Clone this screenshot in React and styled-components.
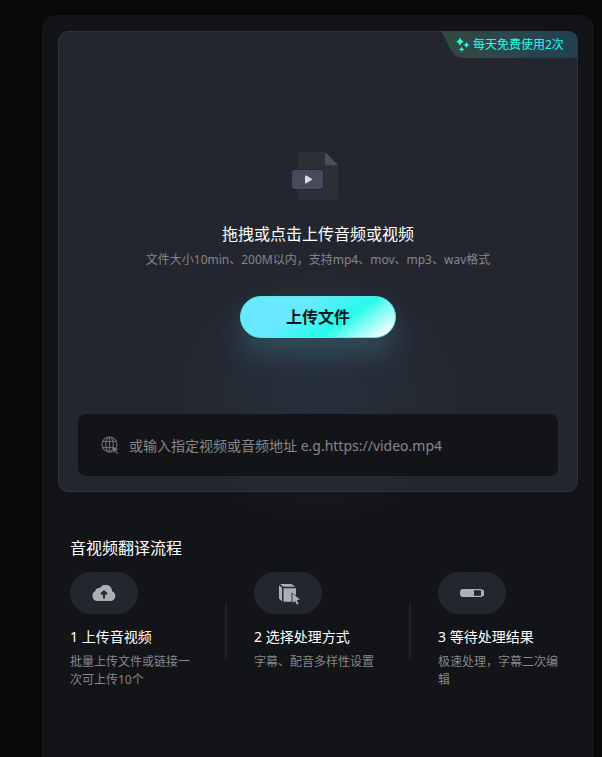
import React, { useState } from 'react';
import styled, { createGlobalStyle } from 'styled-components';

const GlobalStyle = createGlobalStyle`
  * {
    box-sizing: border-box;
  }
  body {
    margin: 0;
    background-color: #090909;
    color: #fff;
    font-family: "Noto Sans", "Noto Sans CJK SC", sans-serif;
  }
  h2, h3, p {
    margin: 0;
    font-weight: 400;
  }
`;
const Page = styled.div`
  display: flex;
  min-height: 100vh;
  padding: 15px 8px 0 42px;
`;
const Panel = styled.main`
  flex: 1;
  min-width: 0;
  padding: 16px;
  border-radius: 14px 14px 0 0;
  background-color: #131418;
`;
const UploadCard = styled.section`
  position: relative;
  display: flex;
  flex-direction: column;
  align-items: center;
  padding: 120px 19px 15px;
  border: 1px solid #303338;
  border-radius: 10px;
  background-color: #23262e;
`;
const Glow = styled.div`
  position: absolute;
  left: 50%;
  bottom: -32px;
  width: 300px;
  height: 260px;
  transform: translateX(-50%);
  background: radial-gradient(closest-side, rgba(54, 100, 130, 0.15), rgba(54, 100, 130, 0.08) 60%, transparent);
  pointer-events: none;
`;
const Badge = styled.div`
  position: absolute;
  top: -1px;
  right: -1px;
  display: flex;
  align-items: center;
  gap: 3px;
  width: 137px;
  height: 27px;
  padding-left: 15px;
  border-radius: 0 10px 0 0;
  background: linear-gradient(90deg, #33493f, #2a474d 50%, #213f4f);
  clip-path: path('M0 0H137V27H25C17 27 13 24 10 19Z');
  color: #26fbea;
  font-size: 12px;
  line-height: 18px;
  white-space: nowrap;
`;
const CardTitle = styled.h2`
  margin-top: 22px;
  font-size: 16px;
  line-height: 24px;
`;
const Hint = styled.p`
  margin-top: 5px;
  color: #85878b;
  font-size: 12px;
  line-height: 18px;
`;
const UploadBtn = styled.button`
  position: relative;
  width: 156px;
  height: 42px;
  margin-top: 27px;
  padding: 0 0 2px;
  border: 1px solid #5ce8e4;
  border-radius: 21px;
  background: linear-gradient(145deg, #68e9ff 36%, #26fbea 64%, #fff 94%) border-box;
  box-shadow: 0 16px 30px rgba(92, 190, 220, 0.24);
  color: #0b1a20;
  font-family: inherit;
  font-size: 16px;
  font-weight: 700;
  cursor: pointer;
`;
const UrlField = styled.label`
  position: relative;
  display: flex;
  align-items: center;
  gap: 8px;
  width: 100%;
  height: 62px;
  margin-top: 76px;
  padding: 0 23px;
  border-radius: 8px;
  background-color: #131418;
`;
const UrlInput = styled.input`
  flex: 1;
  min-width: 0;
  padding: 0;
  border: none;
  outline: none;
  background: none;
  color: #fff;
  font-family: inherit;
  font-size: 14px;
  &::placeholder {
    color: #85878b;
    opacity: 1;
  }
`;
const Process = styled.section`
  padding: 44px 12px 0;
`;
const ProcessTitle = styled.h2`
  font-size: 16px;
  line-height: 24px;
`;
const Steps = styled.div`
  display: grid;
  grid-template-columns: 1fr 2px 1fr 2px 1fr;
  column-gap: 27px;
  margin-top: 12px;
`;
const Divider = styled.div`
  height: 57px;
  margin-top: 30px;
  background-color: #202126;
`;
const IconPill = styled.div`
  display: flex;
  justify-content: center;
  align-items: center;
  width: 68px;
  height: 42px;
  border-radius: 21px;
  background-color: #23262e;
`;
const StepTitle = styled.h3`
  margin-top: 12px;
  font-size: 14px;
  line-height: 22px;
  white-space: nowrap;
`;
const StepText = styled.p`
  margin-top: 5px;
  color: #85878b;
  font-size: 12px;
  line-height: 18px;
`;

const SparkleIcon = () => (
  <svg width="14" height="16" viewBox="0 0 14 16" fill="#26fbea" aria-hidden="true">
    <path d="M4 .5Q4.8 3.9 7.8 4.7Q4.8 5.5 4 9Q3.2 5.5 .2 4.7Q3.2 3.9 4 .5Z" />
    <path d="M10.5 5Q11.1 7.4 13.5 8Q11.1 8.6 10.5 11Q9.9 8.6 7.5 8Q9.9 7.4 10.5 5Z" />
    <path d="M5.7 9.7Q6.3 11.7 8.5 12.3Q6.3 12.9 5.7 15Q5.1 12.9 2.9 12.3Q5.1 11.7 5.7 9.7Z" />
  </svg>
);

const VideoFileIcon = () => (
  <svg width="56" height="48" viewBox="0 0 56 48" aria-hidden="true">
    <path d="M12 0H35L48 13V44Q48 48 44 48H12Q8 48 8 44V4Q8 0 12 0Z" fill="#2e3038" />
    <path d="M35 0L48 13H37Q35 13 35 11Z" fill="#4b4e5b" />
    <rect x="1" y="17" width="33" height="21" rx="4" fill="#24262e" />
    <rect x="2" y="18" width="31" height="19" rx="3" fill="#474a5b" />
    <path d="M15 24.5Q15 23 16.3 23.6L21.7 26.7Q22.6 27.4 21.7 28.1L16.3 31.2Q15 31.8 15 30.4Z" fill="#dcdde0" />
  </svg>
);

const GlobeIcon = () => (
  <svg width="20" height="20" viewBox="0 0 20 20" fill="none" aria-hidden="true">
    <g stroke="#6c6d70" strokeWidth="1.2">
      <circle cx="8.5" cy="9.5" r="7.5" />
      <ellipse cx="8.5" cy="9.5" rx="3.8" ry="7.5" />
      <path d="M1.8 6.5H15.2M1.8 12.5H15.2M8.5 2V17" />
    </g>
    <path d="M10.5 10.5L18 14.4L15.2 15.4L17.2 18.4L15.8 19.4L13.8 16.3L11.8 18.5Z" fill="#77787b" stroke="#131418" strokeWidth=".6" />
  </svg>
);

const CloudIcon = () => (
  <svg width="24" height="16" viewBox="0 0 24 16" aria-hidden="true">
    <path d="M5.5 16A5.3 5.3 0 0 1 3.2 6.1A4.3 4.3 0 0 1 8 3.1A6.5 6.5 0 0 1 20.1 6.2A5.1 5.1 0 0 1 18.5 16Z" fill="#aeafb2" />
    <path d="M12 13.5V7M9 9.3L12 6.3L15 9.3" fill="none" stroke="#23262e" strokeWidth="2" />
  </svg>
);

const CubeIcon = () => (
  <svg width="24" height="24" viewBox="0 0 24 24" fill="#aeafb2" aria-hidden="true">
    <path d="M4 3H15.5L19.3 5.8H7.2Z" />
    <path d="M3 4.2L6 6.8V20.5L3 17.2Z" />
    <path d="M7.5 7.2H20V14.5L15.6 11.5V20.8H7.5Z" />
    <path d="M16.5 12.6L24 18.6L20.8 19.1L22.6 22.8L20.8 23.6L19.1 20L16.5 22Z" />
  </svg>
);

const ProgressIcon = () => (
  <svg width="24" height="8" viewBox="0 0 24 8" aria-hidden="true">
    <rect x=".6" y=".6" width="22.8" height="6.8" rx="3.4" fill="none" stroke="#aeafb2" strokeWidth="1.2" />
    <path d="M4 0H14V8H4A4 4 0 0 1 4 0Z" fill="#aeafb2" />
    <path d="M21 1H22A3 3 0 0 1 22 7H21Z" fill="#aeafb2" />
  </svg>
);

const Step = ({ icon, title, text }) => {
  return (
    <div>
      <IconPill>{icon}</IconPill>
      <StepTitle>{title}</StepTitle>
      <StepText>{text}</StepText>
    </div>
  )
}

const App = () => {
  const [url, setUrl] = useState('');

  return (
    <>
      <GlobalStyle />
      <Page>
        <Panel>
          <UploadCard>
            <Glow />
            <Badge><SparkleIcon />每天免费使用2次</Badge>
            <VideoFileIcon />
            <CardTitle>拖拽或点击上传音频或视频</CardTitle>
            <Hint>文件大小10min、200M以内，支持mp4、mov、mp3、wav格式</Hint>
            <UploadBtn type="button">上传文件</UploadBtn>
            <UrlField>
              <GlobeIcon />
              <UrlInput
                type="url"
                value={url}
                onChange={(e) => setUrl(e.target.value)}
                placeholder="或输入指定视频或音频地址 e.g.https://video.mp4"
              />
            </UrlField>
          </UploadCard>
          <Process>
            <ProcessTitle>音视频翻译流程</ProcessTitle>
            <Steps>
              <Step icon={<CloudIcon />} title="1 上传音视频" text="批量上传文件或链接一次可上传10个" />
              <Divider />
              <Step icon={<CubeIcon />} title="2 选择处理方式" text="字幕、配音多样性设置" />
              <Divider />
              <Step icon={<ProgressIcon />} title="3 等待处理结果" text="极速处理，字幕二次编辑" />
            </Steps>
          </Process>
        </Panel>
      </Page>
    </>
  );
};

export default App;
